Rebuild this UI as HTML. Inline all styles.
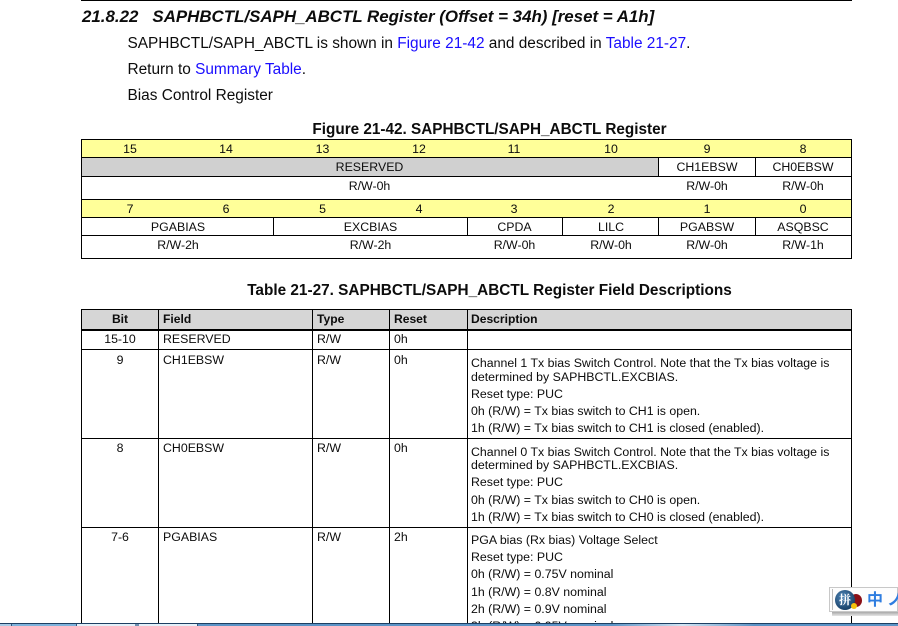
<!DOCTYPE html>
<html>
<head>
<meta charset="utf-8">
<style>
html,body{margin:0;padding:0;background:#fff}
#p{position:relative;width:898px;height:626px;overflow:hidden;background:#fff;font-family:"Liberation Sans",sans-serif;color:#0c0c0c}
#p div{position:absolute}
.t{white-space:nowrap;font-size:12.35px;line-height:14px;height:14px}
.c{text-align:center}
.b{white-space:nowrap;font-size:15.4px;line-height:18px;height:18px}
.h{font-weight:bold;font-size:12.1px}
.l{background:#000}
a{color:#1a0dff;text-decoration:none}
</style>
</head>
<body>
<div id="p">
<div class="l" style="left:81px;top:0;width:771px;height:1px"></div>
<div class="b" style="left:82px;top:8px;font-size:16.9px;font-weight:bold;font-style:italic">21.8.22&nbsp;&nbsp; SAPHBCTL/SAPH_ABCTL Register (Offset = 34h) [reset = A1h]</div>
<div class="b" style="left:127.5px;top:35px">SAPHBCTL/SAPH_ABCTL is shown in <a>Figure 21-42</a> and described in <a>Table 21-27</a>.</div>
<div class="b" style="left:127.5px;top:61px">Return to <a>Summary Table</a>.</div>
<div class="b" style="left:127.5px;top:87px">Bias Control Register</div>
<div class="b c" style="left:81px;width:817px;top:121px;font-size:15.3px;font-weight:bold">Figure 21-42. SAPHBCTL/SAPH_ABCTL Register</div>

<!-- register table fills -->
<div style="left:81px;top:139px;width:771px;height:18px;background:#ffff99"></div>
<div style="left:81px;top:157px;width:577px;height:19px;background:#d0d0d0"></div>
<div style="left:81px;top:199px;width:771px;height:18px;background:#ffff99"></div>
<!-- horizontal -->
<div class="l" style="left:81px;top:139px;width:771px;height:1px"></div>
<div class="l" style="left:81px;top:157px;width:771px;height:1px"></div>
<div class="l" style="left:81px;top:176px;width:771px;height:1px"></div>
<div class="l" style="left:81px;top:199px;width:771px;height:1px"></div>
<div class="l" style="left:81px;top:217px;width:771px;height:1px"></div>
<div class="l" style="left:81px;top:235px;width:771px;height:1px"></div>
<div class="l" style="left:81px;top:258px;width:771px;height:1px"></div>
<!-- vertical -->
<div class="l" style="left:81px;top:139px;width:1px;height:120px"></div>
<div class="l" style="left:851px;top:139px;width:1px;height:120px"></div>
<div class="l" style="left:658px;top:157px;width:1px;height:19px"></div>
<div class="l" style="left:755px;top:157px;width:1px;height:19px"></div>
<div class="l" style="left:273px;top:217px;width:1px;height:18px"></div>
<div class="l" style="left:467px;top:217px;width:1px;height:18px"></div>
<div class="l" style="left:562px;top:217px;width:1px;height:18px"></div>
<div class="l" style="left:658px;top:217px;width:1px;height:18px"></div>
<div class="l" style="left:755px;top:217px;width:1px;height:18px"></div>
<!-- bits row 1 -->
<div class="t c" style="left:82px;width:96px;top:142px">15</div>
<div class="t c" style="left:178px;width:96px;top:142px">14</div>
<div class="t c" style="left:274px;width:97px;top:142px">13</div>
<div class="t c" style="left:371px;width:96px;top:142px">12</div>
<div class="t c" style="left:466px;width:96px;top:142px">11</div>
<div class="t c" style="left:563px;width:96px;top:142px">10</div>
<div class="t c" style="left:659px;width:96px;top:142px">9</div>
<div class="t c" style="left:755px;width:96px;top:142px">8</div>
<div class="t c" style="left:81px;width:577px;top:160px">RESERVED</div>
<div class="t c" style="left:659px;width:96px;top:160px">CH1EBSW</div>
<div class="t c" style="left:755px;width:96px;top:160px">CH0EBSW</div>
<div class="t c" style="left:81px;width:577px;top:179px">R/W-0h</div>
<div class="t c" style="left:659px;width:96px;top:179px">R/W-0h</div>
<div class="t c" style="left:755px;width:96px;top:179px">R/W-0h</div>
<!-- bits row 2 -->
<div class="t c" style="left:82px;width:96px;top:202px">7</div>
<div class="t c" style="left:178px;width:96px;top:202px">6</div>
<div class="t c" style="left:274px;width:97px;top:202px">5</div>
<div class="t c" style="left:371px;width:96px;top:202px">4</div>
<div class="t c" style="left:466px;width:96px;top:202px">3</div>
<div class="t c" style="left:563px;width:96px;top:202px">2</div>
<div class="t c" style="left:659px;width:96px;top:202px">1</div>
<div class="t c" style="left:755px;width:96px;top:202px">0</div>
<div class="t c" style="left:82px;width:192px;top:220px">PGABIAS</div>
<div class="t c" style="left:274px;width:193px;top:220px">EXCBIAS</div>
<div class="t c" style="left:467px;width:95px;top:220px">CPDA</div>
<div class="t c" style="left:563px;width:96px;top:220px">LILC</div>
<div class="t c" style="left:659px;width:96px;top:220px">PGABSW</div>
<div class="t c" style="left:755px;width:96px;top:220px">ASQBSC</div>
<div class="t c" style="left:82px;width:192px;top:238px">R/W-2h</div>
<div class="t c" style="left:274px;width:193px;top:238px">R/W-2h</div>
<div class="t c" style="left:467px;width:95px;top:238px">R/W-0h</div>
<div class="t c" style="left:563px;width:96px;top:238px">R/W-0h</div>
<div class="t c" style="left:659px;width:96px;top:238px">R/W-0h</div>
<div class="t c" style="left:755px;width:96px;top:238px">R/W-1h</div>

<div class="b c" style="left:81px;width:817px;top:282px;font-size:15.35px;font-weight:bold">Table 21-27. SAPHBCTL/SAPH_ABCTL Register Field Descriptions</div>

<!-- field table -->
<div style="left:81px;top:309px;width:771px;height:20px;background:#d6d6d6"></div>
<div class="l" style="left:81px;top:309px;width:771px;height:1px"></div>
<div class="l" style="left:81px;top:329px;width:771px;height:2px"></div>
<div class="l" style="left:81px;top:349px;width:771px;height:1px"></div>
<div class="l" style="left:81px;top:438px;width:771px;height:1px"></div>
<div class="l" style="left:81px;top:527px;width:771px;height:1px"></div>
<div class="l" style="left:81px;top:309px;width:1px;height:317px"></div>
<div class="l" style="left:158px;top:309px;width:1px;height:317px"></div>
<div class="l" style="left:312px;top:309px;width:1px;height:317px"></div>
<div class="l" style="left:389px;top:309px;width:1px;height:317px"></div>
<div class="l" style="left:467px;top:309px;width:1px;height:317px"></div>
<div class="l" style="left:851px;top:309px;width:1px;height:317px"></div>

<div class="t c h" style="left:82px;width:76px;top:312px">Bit</div>
<div class="t h" style="left:163px;top:312px">Field</div>
<div class="t h" style="left:317px;top:312px">Type</div>
<div class="t h" style="left:394px;top:312px">Reset</div>
<div class="t h" style="left:471px;top:312px">Description</div>

<div class="t c" style="left:82px;width:76px;top:332px">15-10</div>
<div class="t" style="left:163px;top:332px">RESERVED</div>
<div class="t" style="left:317px;top:332px">R/W</div>
<div class="t" style="left:394px;top:332px">0h</div>

<div class="t c" style="left:82px;width:76px;top:353px">9</div>
<div class="t" style="left:163px;top:353px">CH1EBSW</div>
<div class="t" style="left:317px;top:353px">R/W</div>
<div class="t" style="left:394px;top:353px">0h</div>
<div class="t" style="left:471px;top:356px">Channel 1 Tx bias Switch Control. Note that the Tx bias voltage is</div>
<div class="t" style="left:471px;top:370px">determined by SAPHBCTL.EXCBIAS.</div>
<div class="t" style="left:471px;top:387px">Reset type: PUC</div>
<div class="t" style="left:471px;top:404px">0h (R/W) = Tx bias switch to CH1 is open.</div>
<div class="t" style="left:471px;top:421px">1h (R/W) = Tx bias switch to CH1 is closed (enabled).</div>

<div class="t c" style="left:82px;width:76px;top:441px">8</div>
<div class="t" style="left:163px;top:441px">CH0EBSW</div>
<div class="t" style="left:317px;top:441px">R/W</div>
<div class="t" style="left:394px;top:441px">0h</div>
<div class="t" style="left:471px;top:445px">Channel 0 Tx bias Switch Control. Note that the Tx bias voltage is</div>
<div class="t" style="left:471px;top:458px">determined by SAPHBCTL.EXCBIAS.</div>
<div class="t" style="left:471px;top:475px">Reset type: PUC</div>
<div class="t" style="left:471px;top:493px">0h (R/W) = Tx bias switch to CH0 is open.</div>
<div class="t" style="left:471px;top:510px">1h (R/W) = Tx bias switch to CH0 is closed (enabled).</div>

<div class="t c" style="left:82px;width:76px;top:530px">7-6</div>
<div class="t" style="left:163px;top:530px">PGABIAS</div>
<div class="t" style="left:317px;top:530px">R/W</div>
<div class="t" style="left:394px;top:530px">2h</div>
<div class="t" style="left:471px;top:533px">PGA bias (Rx bias) Voltage Select</div>
<div class="t" style="left:471px;top:550px">Reset type: PUC</div>
<div class="t" style="left:471px;top:567px">0h (R/W) = 0.75V nominal</div>
<div class="t" style="left:471px;top:585px">1h (R/W) = 0.8V nominal</div>
<div class="t" style="left:471px;top:602px">2h (R/W) = 0.9V nominal</div>
<div class="t" style="left:471px;top:619px">3h (R/W) = 0.95V nominal</div>

<!-- bottom bar -->
<div style="left:0;top:623px;width:898px;height:1px;background:#1d3f63"></div>
<div style="left:0;top:624px;width:898px;height:2px;background:linear-gradient(90deg,#5b93c6 0,#5b93c6 68%,#d3e5f3 76%,#5b93c6 84%,#5b93c6 100%)"></div>
<div style="left:0;top:624px;width:11px;height:2px;background:#a9cbe6"></div>
<div style="left:11px;top:624px;width:1px;height:2px;background:#33587e"></div>
<div style="left:12px;top:624px;width:64px;height:2px;background:#7fb3dc"></div>
<div style="left:76px;top:624px;width:1px;height:2px;background:#33587e"></div>
<div style="left:77px;top:624px;width:58px;height:2px;background:#e4f0f9"></div>
<div style="left:135px;top:624px;width:4px;height:2px;background:#6d8fb0"></div>
<div style="left:139px;top:624px;width:58px;height:2px;background:#e4f0f9"></div>
<div style="left:197px;top:624px;width:1px;height:2px;background:#33587e"></div>

<!-- IME widget -->
<div style="left:832px;top:611px;width:66px;height:5px;background:linear-gradient(#999,#e6e6e6)"></div>
<div style="left:829px;top:587px;width:69px;height:25px;background:#fdfdfd;border:1px solid #c8c8c8;box-sizing:border-box"></div>
<div style="left:832px;top:589px;width:1px;height:21px;background:#bbb"></div>
<div style="left:850px;top:594px;width:12px;height:13px;border-radius:50%;background:#8a0f16"></div>
<div style="left:835px;top:590px;width:20px;height:20px;border-radius:50%;background:radial-gradient(circle at 40% 35%,#4f86b8,#173f66 75%);color:#fff;font:bold 12px/19px 'Noto Serif CJK SC',serif;text-align:center">拼</div>
<div style="left:851px;top:603px;width:6px;height:6px;border-radius:50%;background:#f4c20d"></div>
<div style="left:867px;top:588px;font:bold 16px/20px 'Noto Sans CJK SC',sans-serif;color:#2e7de0;white-space:nowrap">中</div>
<div style="left:887px;top:588px;font:bold 16px/20px 'Noto Sans CJK SC',sans-serif;color:#2e7de0;white-space:nowrap">ノ</div>
</div>
</body>
</html>
